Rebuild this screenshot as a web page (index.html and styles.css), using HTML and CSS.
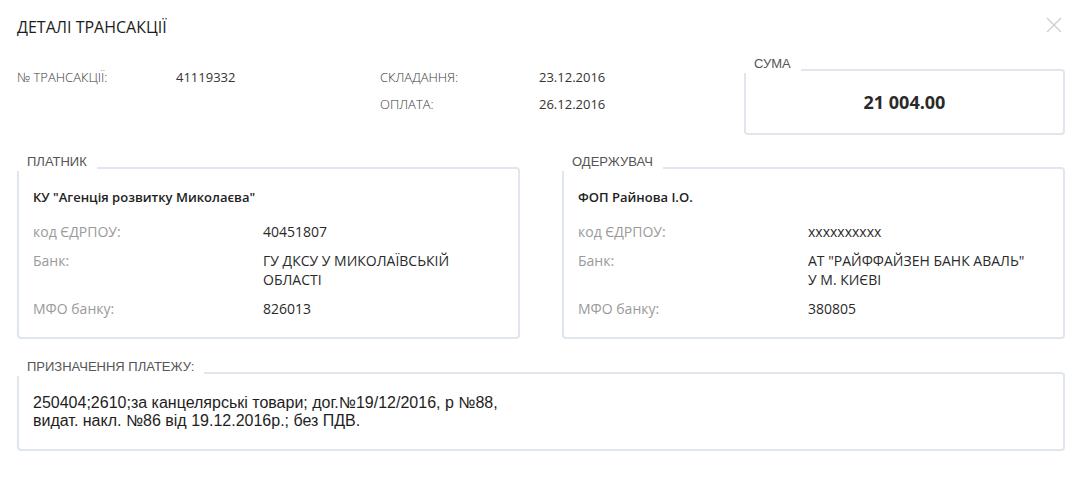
FILE: index.html
```html
<!DOCTYPE html>
<html lang="uk">

<head>
    <meta charset="UTF-8">
    <meta name="viewport" content="width=device-width, initial-scale=1.0">
    <title>Деталі трансакції</title>
    <link rel="stylesheet" href="styles.css">
</head>

<body>
    <div class="modal">
        <div class="modal-header">
            <h1>ДЕТАЛІ ТРАНСАКЦІЇ</h1>
            <button class="close" aria-label="Закрити">
                <svg width="16" height="16" viewBox="0 0 16 16">
                    <path d="M1 1 L15 15 M15 1 L1 15" stroke="#cfcfd3" stroke-width="1.4" fill="none" />
                </svg>
            </button>
        </div>

        <div class="summary">
            <div class="info-grid">
                <div class="info-label">№ ТРАНСАКЦІЇ:</div>
                <div class="info-value">41119332</div>
                <div class="info-label">СКЛАДАННЯ:</div>
                <div class="info-value">23.12.2016</div>
                <div></div>
                <div></div>
                <div class="info-label">ОПЛАТА:</div>
                <div class="info-value">26.12.2016</div>
            </div>
            <div class="box amount-box">
                <div class="legend">СУМА</div>
                <div class="amount">21 004.00</div>
            </div>
        </div>

        <div class="parties">
            <div class="box party">
                <div class="legend">ПЛАТНИК</div>
                <div class="party-name">КУ "Агенція розвитку Миколаєва"</div>
                <div class="party-rows">
                    <div class="party-label">код ЄДРПОУ:</div>
                    <div class="party-value">40451807</div>
                    <div class="party-label">Банк:</div>
                    <div class="party-value">ГУ ДКСУ У МИКОЛАЇВСЬКІЙ<br>ОБЛАСТІ</div>
                    <div class="party-label">МФО банку:</div>
                    <div class="party-value">826013</div>
                </div>
            </div>
            <div class="box party">
                <div class="legend">ОДЕРЖУВАЧ</div>
                <div class="party-name">ФОП Райнова І.О.</div>
                <div class="party-rows">
                    <div class="party-label">код ЄДРПОУ:</div>
                    <div class="party-value">xxxxxxxxxx</div>
                    <div class="party-label">Банк:</div>
                    <div class="party-value">АТ "РАЙФФАЙЗЕН БАНК АВАЛЬ"<br>У М. КИЄВІ</div>
                    <div class="party-label">МФО банку:</div>
                    <div class="party-value">380805</div>
                </div>
            </div>
        </div>

        <div class="box purpose">
            <div class="legend">ПРИЗНАЧЕННЯ ПЛАТЕЖУ:</div>
            <p>250404;2610;за канцелярські товари; дог.№19/12/2016, р №88,<br>видат. накл. №86 від 19.12.2016р.; без ПДВ.</p>
        </div>
    </div>
</body>

</html>
```

FILE: styles.css
```css
:root {
    --text: #222222;
    --muted: #9a9a9a;
    --legend: #555555;
    --line: #dfe6ee;
    --white: #ffffff;
}

body {
    font-family: 'Open Sans', sans-serif;
    background-color: var(--white);
    color: var(--text);
    margin: 0;
    padding: 0;
}

.modal {
    padding: 16px 21px 0 17px;
}

.modal-header {
    display: flex;
    align-items: flex-start;
    justify-content: space-between;
}

h1 {
    margin: 0;
    font-size: 16px;
    font-weight: 400;
    line-height: 22px;
    color: #1c1c1c;
}

.close {
    background: none;
    border: none;
    padding: 0;
    margin: 1px 3px 0 0;
    cursor: pointer;
    width: 16px;
    height: 16px;
}

.close svg {
    display: block;
}

.summary {
    display: flex;
    align-items: flex-start;
    margin-top: 30px;
}

.info-grid {
    flex: 1;
    display: grid;
    grid-template-columns: 159px 204px 159px 1fr;
    grid-auto-rows: 18px;
    row-gap: 9px;
    font-size: 13px;
    line-height: 18px;
}

.info-label {
    font-weight: 300;
    color: #3a3a3a;
}

.info-value {
    color: #333;
}

.box {
    position: relative;
    border: 2px solid var(--line);
    border-radius: 4px;
    box-sizing: border-box;
}

.legend {
    position: absolute;
    top: -15px;
    left: -2px;
    padding: 0 10px 2px 10px;
    background-color: var(--white);
    font-family: 'Liberation Sans', Arial, sans-serif;
    font-size: 13px;
    line-height: 15px;
    color: var(--legend);
}

.amount-box {
    width: 321px;
    height: 66px;
    margin-top: 1px;
    display: flex;
    align-items: center;
    justify-content: center;
}

.amount {
    font-size: 18px;
    font-weight: 700;
    color: #2a2a2a;
}

.parties {
    display: grid;
    grid-template-columns: 1fr 1fr;
    gap: 42px;
    margin-top: 32px;
}

.party {
    padding: 19px 14px 19px;
    font-size: 14px;
    line-height: 19px;
}

.party-name {
    font-size: 13px;
    font-weight: 600;
    margin-bottom: 15px;
}

.party-rows {
    display: grid;
    grid-template-columns: 230px 1fr;
    row-gap: 10px;
}

.party-label {
    color: var(--muted);
}

.party-value {
    color: #2a2a2a;
}

.purpose {
    margin-top: 33px;
    padding: 20px 14px 19px;
}

.purpose p {
    margin: 0;
    font-family: 'Liberation Sans', Arial, sans-serif;
    font-size: 16px;
    line-height: 18px;
    color: #1e1e1e;
}
```
